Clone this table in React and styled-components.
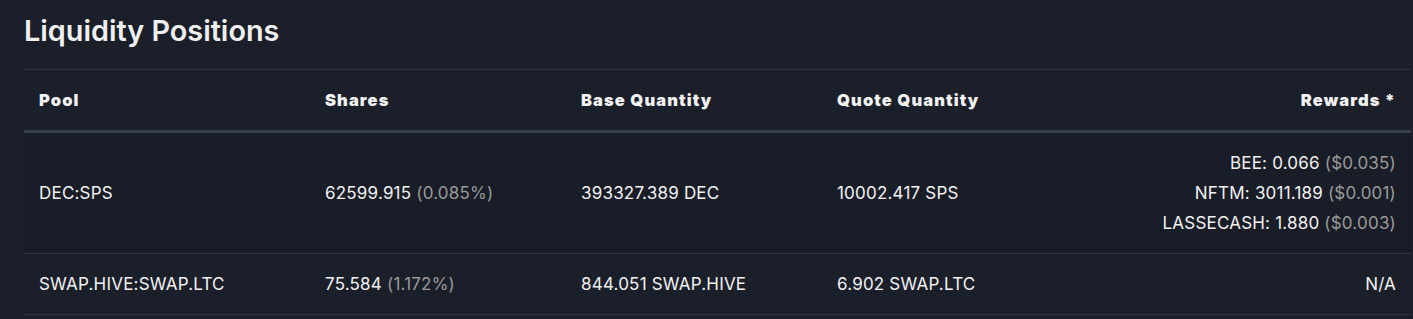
import React from 'react'
import styled, { createGlobalStyle } from 'styled-components'

const GlobalStyle = createGlobalStyle`
  body {
    margin: 0;
    background-color: #1b1f2a;
    color: #f2f2f2;
    font-family: Inter, "Noto Sans", sans-serif;
  }
`

const Page = styled.div`
  padding: 0 2px 0 24px;
`

const Title = styled.h2`
  margin: 0;
  padding: 13px 0 20px;
  font-size: 28.8px;
  line-height: 36px;
  font-weight: 600;
  color: #f0f0f0;
`

const Table = styled.div`
  display: grid;
  grid-template-columns: 286px 256px 256px 256px 1fr;
  border-top: 1px solid #2e3441;
`

const Row = styled.div`
  display: contents;
`

const HeadCell = styled.div`
  padding: 15px;
  line-height: 30px;
  font-size: 16.5px;
  font-weight: 900;
  letter-spacing: 1.1px;
  white-space: nowrap;
  text-align: ${p => (p.$right ? 'right' : 'left')};
  border-bottom: 3px solid #373e4c;
`

const Cell = styled.div`
  display: flex;
  flex-direction: column;
  justify-content: center;
  align-items: ${p => (p.$right ? 'flex-end' : 'flex-start')};
  padding: 15px;
  line-height: 30px;
  font-size: 17px;
  letter-spacing: 0.2px;
  white-space: nowrap;
  background-color: ${p => (p.$striped ? '#191d27' : 'transparent')};
  border-bottom: 1px solid #2e3441;
`

const Muted = styled.span`
  color: #9a9a9a;
`

const rows = [
  {
    pool: 'DEC:SPS',
    shares: '62599.915',
    pct: '0.085%',
    base: '393327.389 DEC',
    quote: '10002.417 SPS',
    rewards: [
      { label: 'BEE: 0.066', usd: '$0.035' },
      { label: 'NFTM: 3011.189', usd: '$0.001' },
      { label: 'LASSECASH: 1.880', usd: '$0.003' },
    ],
  },
  {
    pool: 'SWAP.HIVE:SWAP.LTC',
    shares: '75.584',
    pct: '1.172%',
    base: '844.051 SWAP.HIVE',
    quote: '6.902 SWAP.LTC',
    rewards: null,
  },
]

export default function App() {
  return (
    <>
      <GlobalStyle />
      <Page>
        <Title>Liquidity Positions</Title>
        <Table>
          <Row>
            <HeadCell>Pool</HeadCell>
            <HeadCell>Shares</HeadCell>
            <HeadCell>Base Quantity</HeadCell>
            <HeadCell>Quote Quantity</HeadCell>
            <HeadCell $right>Rewards *</HeadCell>
          </Row>
          {rows.map((r, i) => {
            const striped = i % 2 === 0
            return (
              <Row key={r.pool}>
                <Cell $striped={striped}>{r.pool}</Cell>
                <Cell $striped={striped}>
                  <span>
                    {r.shares} <Muted>({r.pct})</Muted>
                  </span>
                </Cell>
                <Cell $striped={striped}>{r.base}</Cell>
                <Cell $striped={striped}>{r.quote}</Cell>
                <Cell $striped={striped} $right>
                  {r.rewards
                    ? r.rewards.map(rw => (
                        <span key={rw.label}>
                          {rw.label} <Muted>({rw.usd})</Muted>
                        </span>
                      ))
                    : 'N/A'}
                </Cell>
              </Row>
            )
          })}
        </Table>
      </Page>
    </>
  )
}
